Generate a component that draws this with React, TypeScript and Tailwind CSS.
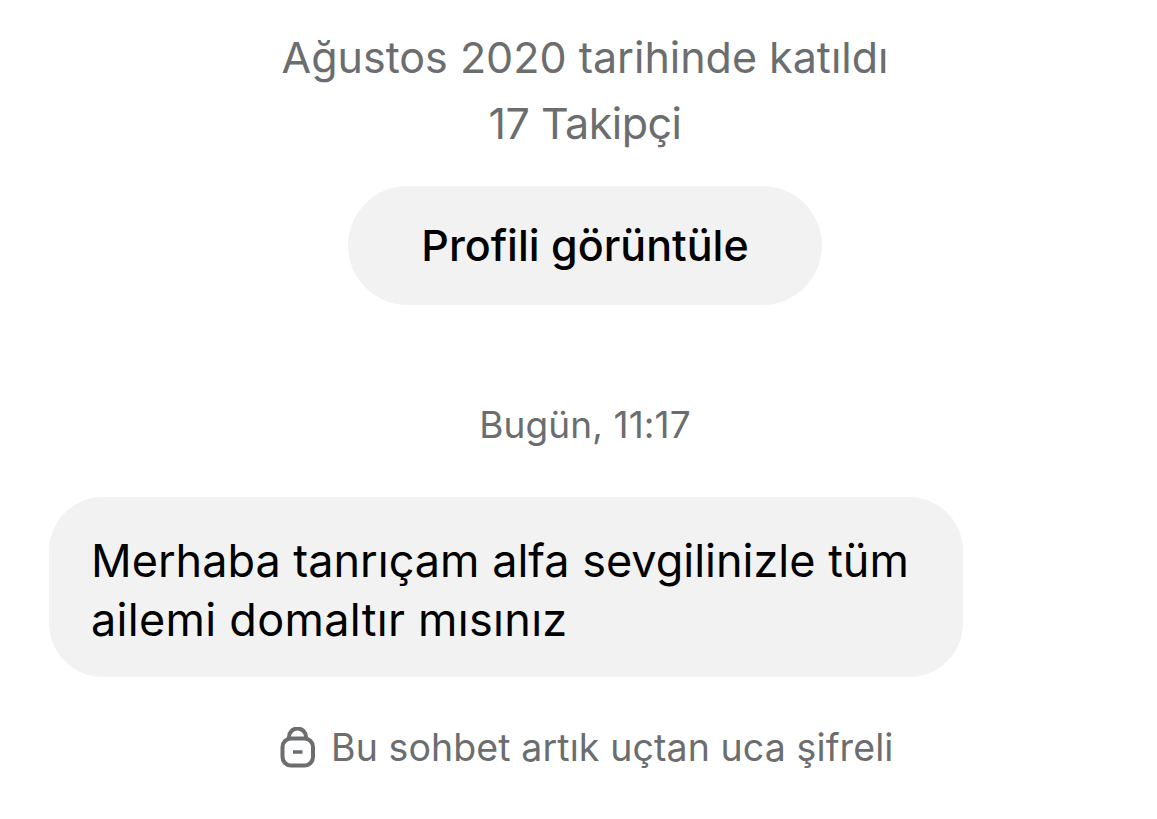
function LockIcon() {
  return (
    <svg viewBox="0 0 36 42" className="h-[42px] w-[36px] shrink-0" fill="none" stroke="currentColor" strokeWidth={4}>
      <rect x="2.5" y="11.5" width="30.5" height="27" rx="8.5" />
      <path d="M9 12V10a8.5 8.5 0 0 1 17 0v2" />
      <path d="M13 25h9.5" strokeWidth={3.5} />
    </svg>
  );
}

export default function App() {
  return (
    <div className="h-[819px] w-[1157px] overflow-hidden bg-white font-['Inter','Liberation_Sans',sans-serif] pt-[25px]">
      <div className="flex flex-col items-center pl-[13px] text-[#6b6d6f]">
        <p className="text-[43px] leading-[65px]">Ağustos 2020 tarihinde katıldı</p>
        <p className="mt-px text-[43px] leading-[65px] tracking-[-0.5px]">17 Takipçi</p>
        <button className="mt-[30px] h-[119px] w-[474px] rounded-full bg-[#f2f2f2] text-[43px] font-medium text-black">
          Profili görüntüle
        </button>
        <p className="mt-[98px] text-[37px] leading-[44px] tracking-[0.1px]">Bugün, 11:17</p>
      </div>
      <div className="ml-[49px] mt-[50px] h-[180px] w-[914px] rounded-[54px] bg-[#f2f2f2] px-[42px] pt-[34px] text-[45px] leading-[59px] text-black">
        Merhaba tanrıçam alfa sevgilinizle tüm
        <br />
        <span className="tracking-[0.3px]">ailemi domaltır mısınız</span>
      </div>
      <div className="ml-[280px] mt-[49px] flex items-center gap-[15px] text-[#6b6d6f]">
        <LockIcon />
        <span className="text-[37.5px] leading-[44px] tracking-[0.1px]">Bu sohbet artık uçtan uca şifreli</span>
      </div>
    </div>
  );
}
